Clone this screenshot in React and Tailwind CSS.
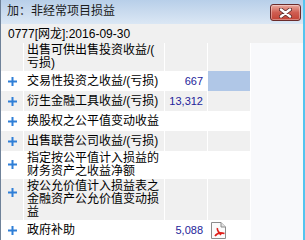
import React from 'react';

const rows = [
  { lines: ['出售可供出售投资收益/(', '亏损)'], plus: false },
  { lines: ['交易性投资之收益/(亏损)'], plus: true, value: '667', mark: true },
  { lines: ['衍生金融工具收益/(亏损)'], plus: true, value: '13,312' },
  { lines: ['换股权之公平值变动收益'], plus: true },
  { lines: ['出售联营公司收益/(亏损)'], plus: true },
  { lines: ['指定按公平值计入损益的', '财务资产之收益净额'], plus: true },
  { lines: ['按公允价值计入损益表之', '金融资产公允价值变动损', '益'], plus: true },
  { lines: ['政府补助'], plus: true, value: '5,088', pdf: true },
];

const Plus = () => (
  <svg width="9" height="9" viewBox="0 0 9 9">
    <rect x="0" y="3.5" width="9" height="2" fill="#2f7fd7" />
    <rect x="3.5" y="0" width="2" height="9" fill="#2f7fd7" />
  </svg>
);

const PdfIcon = () => (
  <svg width="15" height="17" viewBox="0 0 15 17">
    <path d="M0.5 0.5 H10 L14.5 5 V16.5 H0.5 Z" fill="#fbfbfb" stroke="#8c8c8c" />
    <path d="M10 0.5 V5 H14.5" fill="#e2e2e2" stroke="#8c8c8c" />
    <path d="M6.5 6 C5.5 8 8 10.5 10 13 M4 14 C6 11 9 10 13.5 11.5" fill="none" stroke="#e0201b" strokeWidth="1.6" />
  </svg>
);

const CloseButton = () => (
  <div className="w-[31px] h-[17px] rounded-[3px] border border-[#6a2b2b] bg-gradient-to-b from-[#e9a99f] via-[#cf5e52] to-[#c24234] flex items-center justify-center shadow-[inset_0_0_0_1px_rgba(255,255,255,0.35)]">
    <svg width="13" height="10" viewBox="0 0 13 10">
      <path d="M2 1.5 L11 8.5 M11 1.5 L2 8.5" stroke="#5b2a2a" strokeWidth="4" strokeLinecap="round" />
      <path d="M2 1.5 L11 8.5 M11 1.5 L2 8.5" stroke="#ffffff" strokeWidth="2.4" strokeLinecap="round" />
    </svg>
  </div>
);

export default function App() {
  return (
    <div
      className="w-[305px] h-[240px] overflow-hidden flex border-l border-[#6f8299] text-black text-[12px]"
      style={{ fontFamily: '"Liberation Sans", "Noto Sans CJK SC", sans-serif' }}
    >
      <div className="flex-1 flex flex-col min-w-0">
        {/* title bar */}
        <div className="h-[24px] shrink-0 flex items-center justify-between pl-[6px] pr-[2px] bg-gradient-to-b from-[#b8cfe9] to-[#dbe7f4]">
          <span className="text-[12px] text-[#1b1b1b] leading-none pb-[2px]">加：非经常项目损益</span>
          <div className="self-start mt-[4px]">
            <CloseButton />
          </div>
        </div>

        <div className="flex-1 flex flex-col bg-[#f0f0f0]">
          <div className="h-[19px] shrink-0 flex items-center pl-[7px] leading-none">0777[网龙]:2016-09-30</div>

          <div className="flex-1 flex min-h-0">
            <div className="grid grid-cols-[22px_140px_42px_42px] gap-x-px bg-white content-start">
              {rows.map((r, i) => {
                const bg = i % 2 === 0 ? 'bg-[#f0f0f0]' : 'bg-white';
                return (
                  <React.Fragment key={i}>
                    <div className={`${bg} flex justify-center`}>
                      {r.plus && (
                        <div className="h-full max-h-[26px] flex items-center">
                          <Plus />
                        </div>
                      )}
                    </div>
                    <div className={`${bg} min-h-[20px] py-px pl-[3px] flex flex-col justify-center leading-[13px] whitespace-nowrap`}>
                      {r.lines.map((l, j) => (
                        <span key={j}>{l}</span>
                      ))}
                    </div>
                    <div className={`${bg} flex items-center justify-end pr-[4px] text-[11px] text-[#24249a]`}>
                      {r.value}
                    </div>
                    <div className={`${r.mark ? 'bg-[#b0c7e7]' : bg} flex items-center pl-[3px]`}>
                      {r.pdf && <PdfIcon />}
                    </div>
                  </React.Fragment>
                );
              })}
            </div>
            <div className="flex-1 border-l border-white bg-[#f8f9fb]" />
          </div>
        </div>
      </div>
      <div className="w-[2px] shrink-0 bg-[#54c4ef]" />
    </div>
  );
}
